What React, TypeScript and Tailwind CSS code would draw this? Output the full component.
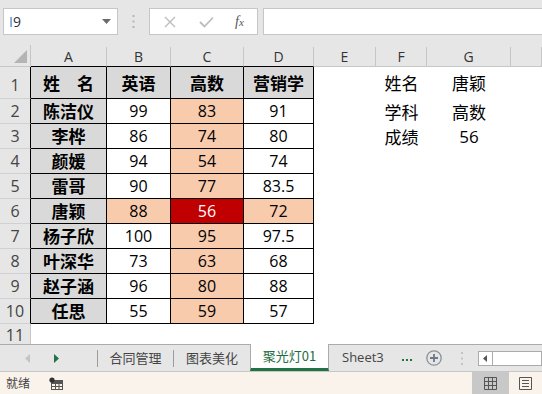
import React from "react";

const FONT = { fontFamily: '"Open Sans", "Noto Sans CJK SC", sans-serif' };
const CJK = { fontFamily: '"Noto Sans CJK SC", "Open Sans", sans-serif' };

// column widths: A..H
const colW = ["w-[76px]", "w-[64px]", "w-[73px]", "w-[70px]", "w-[62px]", "w-[51px]", "w-[84px]", "flex-1"];
const letters = ["A", "B", "C", "D", "E", "F", "G", ""];

const rows = [
  { name: "陈洁仪", b: "99", c: "83", d: "91" },
  { name: "李桦", b: "86", c: "74", d: "80" },
  { name: "颜媛", b: "94", c: "54", d: "74" },
  { name: "雷哥", b: "90", c: "77", d: "83.5" },
  { name: "唐颖", b: "88", c: "56", d: "72" },
  { name: "杨子欣", b: "100", c: "95", d: "97.5" },
  { name: "叶深华", b: "73", c: "63", d: "68" },
  { name: "赵子涵", b: "96", c: "80", d: "88" },
  { name: "任思", b: "55", c: "59", d: "57" },
];

const side: Record<number, [string, string]> = {
  1: ["姓名", "唐颖"],
  2: ["学科", "高数"],
  3: ["成绩", "56"],
};

const FormulaBar = () => (
  <div className="h-[45px] bg-[#e6e6e6] flex items-start pt-[8px]">
    <div className="ml-[3px] w-[115px] h-[27px] bg-white border border-[#c6c6c6] flex items-center justify-between pl-[5px] pr-[6px]">
      <span className="text-[14px] text-[#333]" style={FONT}>
        <span className="text-[#3b82c4]">I</span>9
      </span>
      <svg width="9" height="6" viewBox="0 0 9 6">
        <path d="M0 0 L9 0 L4.5 5 Z" fill="#6b6b6b" />
      </svg>
    </div>
    <div className="w-[31px] h-[27px] flex items-center justify-center">
      <svg width="3" height="13" viewBox="0 0 3 13">
        <rect x="0.5" y="0" width="2" height="2" fill="#b5b5b5" />
        <rect x="0.5" y="5.5" width="2" height="2" fill="#b5b5b5" />
        <rect x="0.5" y="11" width="2" height="2" fill="#b5b5b5" />
      </svg>
    </div>
    <div className="w-[109px] h-[27px] bg-white border border-[#c6c6c6] flex items-center pl-[14px]">
      <svg width="12" height="12" viewBox="0 0 12 12">
        <path d="M1 1 L11 11 M11 1 L1 11" stroke="#bdbdbd" strokeWidth="1.4" />
      </svg>
      <svg className="ml-[23px]" width="15" height="12" viewBox="0 0 15 12">
        <path d="M1 6 L5.5 10.5 L14 1.5" stroke="#bdbdbd" strokeWidth="1.8" fill="none" />
      </svg>
      <span
        className="ml-[21px] text-[14px] italic text-[#555]"
        style={{ fontFamily: '"Liberation Serif", serif' }}
      >
        f<span className="text-[11px]">x</span>
      </span>
    </div>
    <div className="ml-[5px] flex-1 h-[27px] bg-white border-y border-l border-[#c6c6c6]" />
  </div>
);

const HeaderRow = () => (
  <div className="h-[22px] flex items-end bg-[#e6e6e6]">
    <div className="w-[31px] h-[22px] border-r border-b border-[#c6c6c6] flex items-end justify-end pr-[3px] pb-[3px]">
      <svg width="13" height="13" viewBox="0 0 13 13">
        <path d="M13 0 L13 13 L0 13 Z" fill="#b4b4b4" />
      </svg>
    </div>
    {letters.map((l, i) => (
      <div
        key={i}
        className={`${colW[i]} h-[20px] border-r border-b ${i < 4 ? "border-b-black" : "border-b-[#c6c6c6]"} border-r-[#c6c6c6] flex items-center justify-center text-[14px] text-[#333]`}
        style={FONT}
      >
        {l}
      </div>
    ))}
  </div>
);

const RowNum = ({ n, tall, table }: { n: number; tall?: boolean; table?: boolean }) => (
  <div
    className={`w-[31px] h-full bg-[#e6e6e6] border-b border-b-[#d0d0d0] border-r ${table ? "border-r-black" : "border-r-[#c6c6c6]"} flex justify-center text-[16px] text-[#444] ${tall ? "items-end pb-[1px]" : "items-center"}`}
    style={FONT}
  >
    {n}
  </div>
);

const Cell = ({ w, cls, children, cjk }: { w: string; cls: string; children?: React.ReactNode; cjk?: boolean }) => (
  <div className={`${w} h-full flex items-center justify-center ${cls}`} style={cjk ? CJK : FONT}>
    {children}
  </div>
);

const SideCells = ({ n }: { n: number }) => {
  const s = side[n];
  return (
    <>
      <Cell w={colW[4]} cls="" />
      <Cell w={colW[5]} cls="text-[17px] text-black" cjk>
        {s ? s[0] : null}
      </Cell>
      <Cell w={colW[6]} cls="text-[17px] text-black" cjk={!!s && n !== 3}>
        {s ? s[1] : null}
      </Cell>
      <Cell w={colW[7]} cls="" />
    </>
  );
};

const tb = "border-r border-b border-black";
const gray = "bg-[#d9d9d9]";
const peach = "bg-[#f8cbad]";

const Sheet = () => (
  <div className="bg-white">
    <div className="h-[32px] flex">
      <RowNum n={1} tall table />
      <Cell w={colW[0]} cls={`${tb} ${gray} text-[17px] font-bold text-black`} cjk>
        姓<span className="w-[17px]" />名
      </Cell>
      <Cell w={colW[1]} cls={`${tb} ${gray} text-[17px] font-bold text-black`} cjk>
        英语
      </Cell>
      <Cell w={colW[2]} cls={`${tb} ${gray} text-[17px] font-bold text-black`} cjk>
        高数
      </Cell>
      <Cell w={colW[3]} cls={`${tb} ${gray} text-[17px] font-bold text-black`} cjk>
        营销学
      </Cell>
      <SideCells n={1} />
    </div>
    {rows.map((r, i) => {
      const n = i + 2;
      const hl = r.name === "唐颖";
      return (
        <div key={n} className="h-[25px] flex">
          <RowNum n={n} table />
          <Cell w={colW[0]} cls={`${tb} ${gray} text-[17px] font-bold text-black`} cjk>
            {r.name}
          </Cell>
          <Cell w={colW[1]} cls={`${tb} ${hl ? peach : "bg-white"} text-[16px] text-black`}>
            {r.b}
          </Cell>
          <Cell w={colW[2]} cls={`${tb} ${hl ? "bg-[#c00000] text-white" : `${peach} text-black`} text-[16px]`}>
            {r.c}
          </Cell>
          <Cell w={colW[3]} cls={`${tb} ${hl ? peach : "bg-white"} text-[16px] text-black`}>
            {r.d}
          </Cell>
          <SideCells n={n} />
        </div>
      );
    })}
    <div className="h-[20px] flex">
      <div
        className="w-[31px] h-full bg-[#e6e6e6] border-r border-[#c6c6c6] flex justify-center items-start text-[16px] text-[#444] leading-[22px]"
        style={FONT}
      >
        11
      </div>
      <div className="flex-1 bg-white" />
    </div>
  </div>
);

const TabSep = () => <div className="w-px h-[17px] bg-[#9c9c9c]" />;

const TabBar = () => (
  <div className="h-[28px] flex bg-[#e6e6e6] border-b border-[#c6c6c6]" style={CJK}>
    <div className="w-[98px] border-t border-[#ababab] flex items-center">
      <svg className="ml-[25px]" width="5" height="9" viewBox="0 0 5 9">
        <path d="M5 0 L5 9 L0 4.5 Z" fill="#c4c4c4" />
      </svg>
      <svg className="ml-[24px]" width="5" height="9" viewBox="0 0 5 9">
        <path d="M0 0 L0 9 L5 4.5 Z" fill="#217346" />
      </svg>
      <div className="ml-auto">
        <TabSep />
      </div>
    </div>
    <div className="w-[76px] border-t border-[#ababab] flex items-center">
      <span className="flex-1 text-center text-[13px] text-[#444]">合同管理</span>
      <TabSep />
    </div>
    <div className="w-[76px] border-t border-[#ababab] flex items-center">
      <span className="flex-1 text-center text-[13px] text-[#444]">图表美化</span>
    </div>
    <div className="w-[79px] bg-white border-x border-[#ababab] border-b-[3px] border-b-[#217346] flex items-center justify-center text-[13px] text-[#1e6b40]">
      聚光灯01
    </div>
    <div className="flex-1 border-t border-[#ababab] flex items-center">
      <span className="ml-[13px] text-[13px] text-[#444]" style={FONT}>
        Sheet3
      </span>
      <span className="ml-[18px] flex gap-[2px] items-center mt-[3px]">
        <span className="w-[2px] h-[2px] bg-[#217346]" />
        <span className="w-[2px] h-[2px] bg-[#217346]" />
        <span className="w-[2px] h-[2px] bg-[#217346]" />
      </span>
      <svg className="ml-[14px]" width="16" height="16" viewBox="0 0 16 16">
        <circle cx="8" cy="8" r="7.2" stroke="#8a8f99" strokeWidth="1.3" fill="none" />
        <path d="M8 4 V12 M4 8 H12" stroke="#6d7889" strokeWidth="1.8" />
      </svg>
      <svg className="ml-[19px]" width="2" height="13" viewBox="0 0 2 13">
        <rect x="0" y="0" width="2" height="2" fill="#c4c4c4" />
        <rect x="0" y="5.5" width="2" height="2" fill="#c4c4c4" />
        <rect x="0" y="11" width="2" height="2" fill="#c4c4c4" />
      </svg>
      <div className="ml-[15px] flex-1 h-[15px] bg-white border border-[#ababab] flex items-center">
        <div className="w-[14px] h-full border-r border-[#ababab] flex items-center justify-center">
          <svg width="4" height="7" viewBox="0 0 4 7">
            <path d="M4 0 L4 7 L0 3.5 Z" fill="#555" />
          </svg>
        </div>
      </div>
    </div>
  </div>
);

const StatusBar = () => (
  <div className="h-[22px] bg-[#f9f3eb] flex items-center" style={CJK}>
    <span className="ml-[6px] text-[12px] text-[#444]">就绪</span>
    <svg className="ml-[19px]" width="14" height="13" viewBox="0 0 14 13">
      <rect x="2.5" y="3.5" width="11" height="9" fill="none" stroke="#555" />
      <path d="M2.5 6.5 H13.5 M2.5 9.5 H13.5 M6.5 6.5 V12.5 M10 6.5 V12.5" stroke="#555" />
      <rect x="2.5" y="3.5" width="11" height="3" fill="#555" />
      <circle cx="3" cy="3" r="2.6" fill="#333" />
    </svg>
    <div className="ml-auto w-[37px] h-full bg-[#c8c8c8] flex items-center justify-center">
      <svg width="13" height="13" viewBox="0 0 13 13">
        <path d="M0.5 0.5 H12.5 V12.5 H0.5 Z M0.5 4.5 H12.5 M0.5 8.5 H12.5 M4.5 0.5 V12.5 M8.5 0.5 V12.5" stroke="#555" fill="none" />
      </svg>
    </div>
    <div className="w-[33px] h-full flex items-center justify-center">
      <svg width="13" height="13" viewBox="0 0 13 13">
        <path d="M0.5 0.5 H12.5 V12.5 H0.5 Z" stroke="#555" fill="none" />
        <path d="M3 3.5 H10 M3 6.5 H10 M3 9.5 H10" stroke="#555" />
      </svg>
    </div>
  </div>
);

export default function App() {
  return (
    <div className="w-[542px] h-[394px] overflow-hidden flex flex-col">
      <FormulaBar />
      <HeaderRow />
      <Sheet />
      <TabBar />
      <StatusBar />
    </div>
  );
}
